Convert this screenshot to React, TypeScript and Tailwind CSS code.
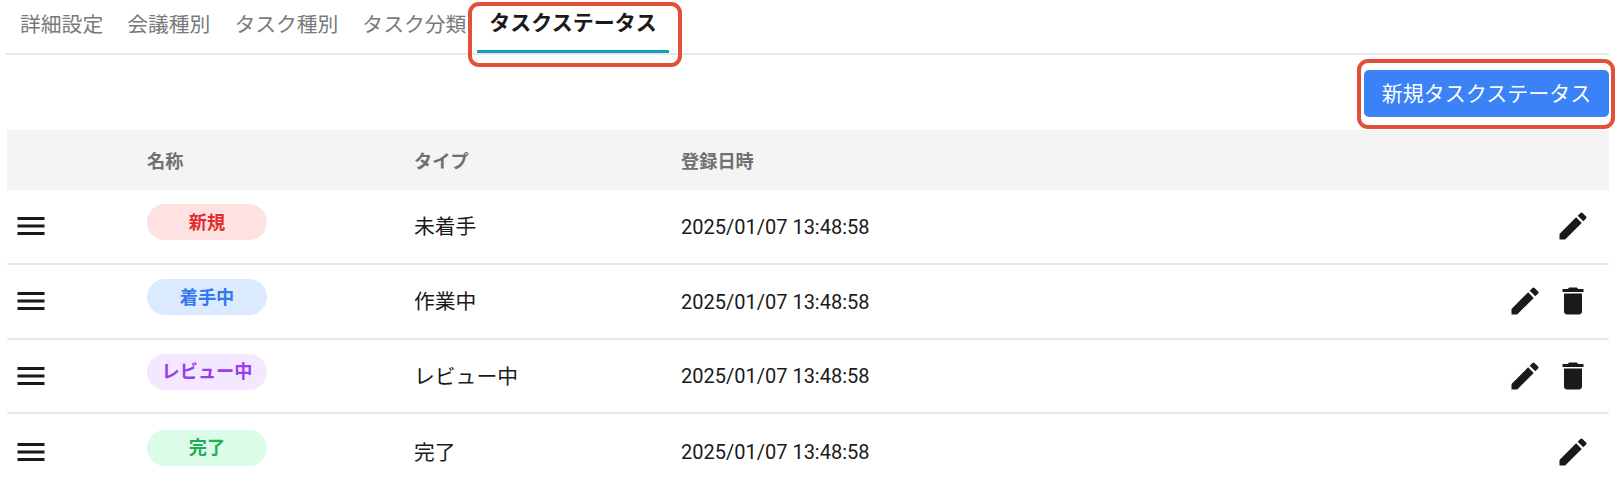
import React from 'react';

const tabs = ['詳細設定', '会議種別', 'タスク種別', 'タスク分類'];

const statuses = [
  { name: '新規', pill: 'bg-[#fee2e2] text-[#e02d2d]', type: '未着手', canDelete: false },
  { name: '着手中', pill: 'bg-[#dbeafe] text-[#3478f0]', type: '作業中', canDelete: true },
  { name: 'レビュー中', pill: 'bg-[#f3e8ff] text-[#9a3cf0]', type: 'レビュー中', canDelete: true },
  { name: '完了', pill: 'bg-[#dcfce7] text-[#1fae55]', type: '完了', canDelete: false },
];

const Icon: React.FC<{ d: string }> = ({ d }) => (
  <svg viewBox="0 0 24 24" className="w-9 h-9 fill-[#1a1a1a] shrink-0">
    <path d={d} />
  </svg>
);

const MENU = 'M3 18h18v-2H3zm0-5h18v-2H3zm0-7v2h18V6z';
const EDIT = 'M3 17.25V21h3.75L17.81 9.94l-3.75-3.75zM20.71 7.04c.39-.39.39-1.02 0-1.41l-2.34-2.34a.9959.9959 0 0 0-1.41 0l-1.83 1.83 3.75 3.75z';
const DELETE = 'M6 19c0 1.1.9 2 2 2h8c1.1 0 2-.9 2-2V7H6zM19 4h-3.5l-1-1h-5l-1 1H5v2h14z';

const ROW = 'grid grid-cols-[140px_267px_267px_1fr_auto] items-center';

export default function App() {
  return (
    <div className="relative w-[1618px] h-[496px] bg-white overflow-hidden font-['Roboto','Noto_Sans_CJK_JP',sans-serif]">
      {/* タブ */}
      <div className="ml-[6px] mr-[9px] h-[55px] flex items-stretch pl-[2px] border-b-2 border-[#e8e8e8]">
        {tabs.map((tab) => (
          <div key={tab} className="px-3 pb-[2px] flex items-center text-[20.8px] text-[#7a7a7a] whitespace-nowrap">
            {tab}
          </div>
        ))}
        <div className="ml-[-1px] px-3 pb-[2px] flex items-center h-[53px] border-b-[3px] border-[#14a0b4] text-[21px] font-bold text-[#1a1a1a] whitespace-nowrap">
          タスクステータス
        </div>
      </div>

      {/* 新規ボタン */}
      <div className="mr-[9px] h-[75px] flex justify-end items-start pt-[15px]">
        <button className="w-[245px] h-[47px] pt-[3px] rounded-[5px] bg-[#3b82f6] text-white text-[21px] whitespace-nowrap">
          新規タスクステータス
        </button>
      </div>

      {/* テーブル */}
      <div className="ml-[7px] mr-[9px]">
        <div className={`${ROW} h-[60px] pt-1 bg-[#f4f4f4] text-[18.2px] font-bold text-[#707070]`}>
          <div />
          <div>名称</div>
          <div>タイプ</div>
          <div>登録日時</div>
          <div />
        </div>
        {statuses.map((s, i) => (
          <div key={s.name} className={`${ROW} h-[74.8px] ${i < 3 ? 'border-b-2 border-[#e8e8e8]' : ''}`}>
            <div className="pl-[6px]">
              <Icon d={MENU} />
            </div>
            <div>
              <div className={`w-[120px] h-9 mb-2 rounded-full flex items-center justify-center text-[18.2px] font-bold ${s.pill}`}>
                {s.name}
              </div>
            </div>
            <div className="pt-[3px] text-[20.8px] text-[#1a1a1a]">{s.type}</div>
            <div className="pt-[1px] text-[20px] text-[#1a1a1a]">2025/01/07 13:48:58</div>
            <div className="flex items-center gap-3 pr-[18px]">
              {s.canDelete ? (
                <>
                  <Icon d={EDIT} />
                  <Icon d={DELETE} />
                </>
              ) : (
                <Icon d={EDIT} />
              )}
            </div>
          </div>
        ))}
      </div>

      {/* 注釈の赤枠 */}
      <div className="absolute left-[468px] top-[2px] w-[214px] h-[65px] border-4 border-[#e2503a] rounded-[11px] pointer-events-none" />
      <div className="absolute left-[1357px] top-[59px] w-[258px] h-[70px] border-4 border-[#e2503a] rounded-[11px] pointer-events-none" />
    </div>
  );
}
